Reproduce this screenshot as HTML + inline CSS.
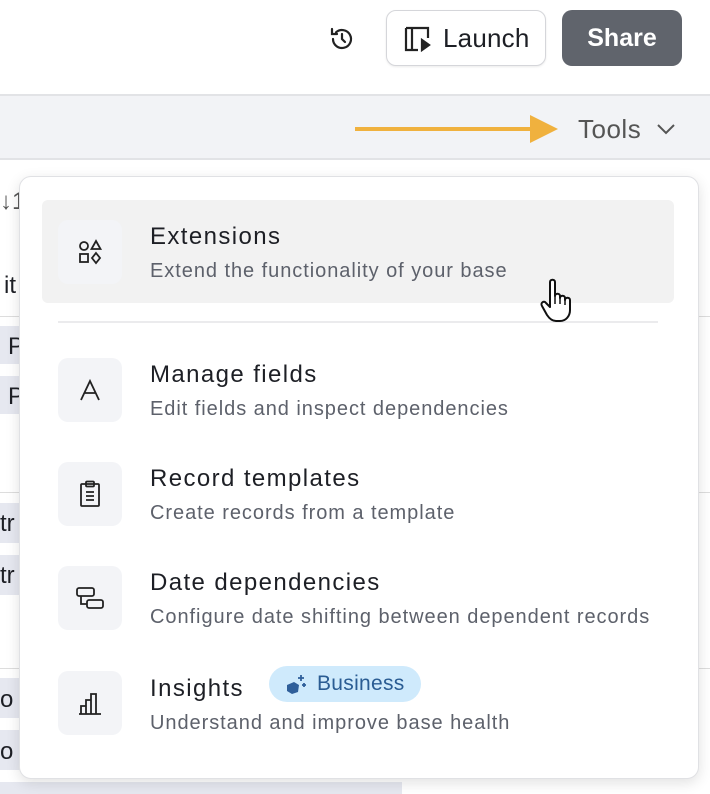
<!DOCTYPE html><html><head><style>
*{margin:0;padding:0;box-sizing:border-box}
body{width:710px;height:794px;overflow:hidden;background:#fff;font-family:"Liberation Sans",sans-serif;position:relative;color:#1d1f25}
.a{position:absolute}
.ib{position:absolute;left:58px;width:64px;height:64px;border-radius:10px;background:#f3f4f7;display:flex;align-items:center;justify-content:center}
.t{position:absolute;left:150px;font-size:24px;letter-spacing:1.4px;color:#1d1f25}
.s{position:absolute;left:150px;font-size:20px;letter-spacing:0.95px;color:#5d616b}
</style></head><body>
<div class="a" style="left:0;top:94px;width:710px;height:2px;background:#e2e3e6"></div>
<div class="a" style="left:0;top:96px;width:710px;height:62px;background:#f2f3f6"></div>
<div class="a" style="left:0;top:158px;width:710px;height:2px;background:#e2e3e6"></div>
<div class="a" style="left:0;top:188px;font-size:24px;color:#555">↓1</div>
<div class="a" style="left:0;top:316px;width:710px;height:1px;background:#ddd"></div>
<div class="a" style="left:4px;top:272px;font-size:24px">it</div>
<div class="a" style="left:0;top:326px;width:30px;height:38px;background:#e6e8f0"></div>
<div class="a" style="left:8px;top:333px;font-size:24px">P</div>
<div class="a" style="left:0;top:376px;width:30px;height:38px;background:#e6e8f0"></div>
<div class="a" style="left:8px;top:383px;font-size:24px">P</div>
<div class="a" style="left:0;top:492px;width:710px;height:1px;background:#ddd"></div>
<div class="a" style="left:0;top:503px;width:30px;height:40px;background:#e6e8f0"></div>
<div class="a" style="left:0;top:510px;font-size:24px">tr</div>
<div class="a" style="left:0;top:555px;width:30px;height:40px;background:#e6e8f0"></div>
<div class="a" style="left:0;top:562px;font-size:24px">tr</div>
<div class="a" style="left:0;top:668px;width:710px;height:1px;background:#ddd"></div>
<div class="a" style="left:0;top:678px;width:30px;height:40px;background:#e6e8f0"></div>
<div class="a" style="left:0;top:686px;font-size:24px">o</div>
<div class="a" style="left:0;top:730px;width:30px;height:40px;background:#e6e8f0"></div>
<div class="a" style="left:0;top:738px;font-size:24px">o</div>
<div class="a" style="left:0;top:782px;width:402px;height:12px;background:#e6e8f0"></div>
<svg class="a" style="left:328px;top:25px" width="28" height="28" viewBox="0 0 28 28" fill="none" stroke="#222" stroke-width="2.2" stroke-linecap="round"><path d="M5 14a9 9 0 1 0 3-6.7"/><path d="M4 4v5h5"/><path d="M14 9v5l3 3"/></svg>
<div class="a" style="left:386px;top:10px;width:160px;height:56px;border:1px solid #d5d6da;border-radius:10px;background:#fff;box-shadow:0 1px 2px rgba(0,0,0,.08)"></div>
<svg class="a" style="left:404px;top:26px" width="30" height="26" viewBox="0 0 30 26" fill="none" stroke="#222" stroke-width="2.2"><path d="M2 2h22v10M2 2v22h12M8 2v22"/><path d="M18 14v10l7-5z" fill="#222"/></svg>
<div class="a" style="left:443px;top:23px;font-size:26px;letter-spacing:0.2px;color:#1d1f25">Launch</div>
<div class="a" style="left:562px;top:10px;width:120px;height:56px;border-radius:10px;background:#60646c;color:#fff;font-size:25px;font-weight:bold;display:flex;align-items:center;justify-content:center">Share</div>
<div class="a" style="left:355px;top:127px;width:180px;height:4px;background:#f0b13e"></div>
<svg class="a" style="left:530px;top:115px" width="30" height="28"><path d="M0 0L28 14L0 28z" fill="#f0b13e"/></svg>
<div class="a" style="left:578px;top:114px;font-size:26px;letter-spacing:0.5px;color:#555">Tools</div>
<svg class="a" style="left:656px;top:122px" width="20" height="14" fill="none" stroke="#555" stroke-width="2"><path d="M2 3l8 8 8-8"/></svg>
<div class="a" style="left:19px;top:176px;width:680px;height:603px;background:#fff;border:1px solid #e0e1e4;border-radius:12px;box-shadow:0 4px 14px rgba(0,0,0,.12)"></div>
<div class="a" style="left:42px;top:200px;width:632px;height:103px;background:#f2f2f2;border-radius:6px"></div>
<div class="a" style="left:58px;top:321px;width:600px;height:2px;background:#ebebed"></div>
<div class="ib" style="top:220px"><svg width="26" height="26" viewBox="0 0 26 26" fill="none" stroke="#222" stroke-width="1.8"><circle cx="7" cy="7" r="4"/><path d="M19 2l4.5 8h-9z"/><rect x="3" y="15" width="8" height="8"/><path d="M19 14l4 5-4 5-4-5z"/></svg></div>
<div class="t" style="top:223px">Extensions</div>
<div class="s" style="top:260px">Extend the functionality of your base</div>
<svg class="a" style="left:538px;top:278px" width="40" height="46" viewBox="0 0 40 46"><path d="M12 4c0-3 5-3 5 0v14c0-3 5-3 5 0v2c0-3 5-3 5 0v2c0-3 5-3 5 0v10c0 6-4 11-10 11h-4c-4 0-7-3-9-6L4 28c-2-3 2-6 4-3l4 4z" fill="#fff" stroke="#111" stroke-width="2" stroke-linejoin="round"/><path d="M17 18v8M22 20v6M27 22v5" stroke="#111" stroke-width="1.5"/></svg>
<div class="ib" style="top:358px"><svg width="24" height="24" viewBox="0 0 24 24" fill="none" stroke="#222" stroke-width="1.8"><path d="M3 22L12 3l9 19M6.5 15h11"/></svg></div>
<div class="t" style="top:361px">Manage fields</div>
<div class="s" style="top:398px">Edit fields and inspect dependencies</div>
<div class="ib" style="top:462px"><svg width="24" height="28" viewBox="0 0 24 28" fill="none" stroke="#222" stroke-width="1.8"><rect x="3" y="4" width="18" height="22" rx="1"/><rect x="8" y="1.5" width="8" height="5" rx="1"/><path d="M8 12h8M8 16h8M8 20h8"/></svg></div>
<div class="t" style="top:465px">Record templates</div>
<div class="s" style="top:502px">Create records from a template</div>
<div class="ib" style="top:566px"><svg width="30" height="26" viewBox="0 0 30 26" fill="none" stroke="#222" stroke-width="1.8"><rect x="2" y="3" width="17" height="8" rx="2"/><rect x="12" y="15" width="16" height="8" rx="2"/><path d="M6 11v8h6"/></svg></div>
<div class="t" style="top:569px">Date dependencies</div>
<div class="s" style="top:606px">Configure date shifting between dependent records</div>
<div class="ib" style="top:671px"><svg width="26" height="26" viewBox="0 0 26 26" fill="none" stroke="#222" stroke-width="1.8"><path d="M2 24h22M4 24v-8h5v8M9 24V10h5v14M14 24V4h5v20"/></svg></div>
<div class="t" style="top:675px">Insights</div>
<div class="a" style="left:269px;top:666px;width:152px;height:36px;border-radius:18px;background:#cfeafc"></div>
<svg class="a" style="left:284px;top:673px" width="24" height="22" viewBox="0 0 24 22"><path d="M3 12l7-3 5 3-1 7-6 2-5-3z" fill="#2f5f9a"/><path d="M17 2v6M14 5h6M20 10v4M18 12h4" stroke="#2f5f9a" stroke-width="1.8"/></svg>
<div class="a" style="left:317px;top:672px;font-size:21px;letter-spacing:0.3px;color:#2a5c93">Business</div>
<div class="s" style="top:712px">Understand and improve base health</div>
</body></html>
